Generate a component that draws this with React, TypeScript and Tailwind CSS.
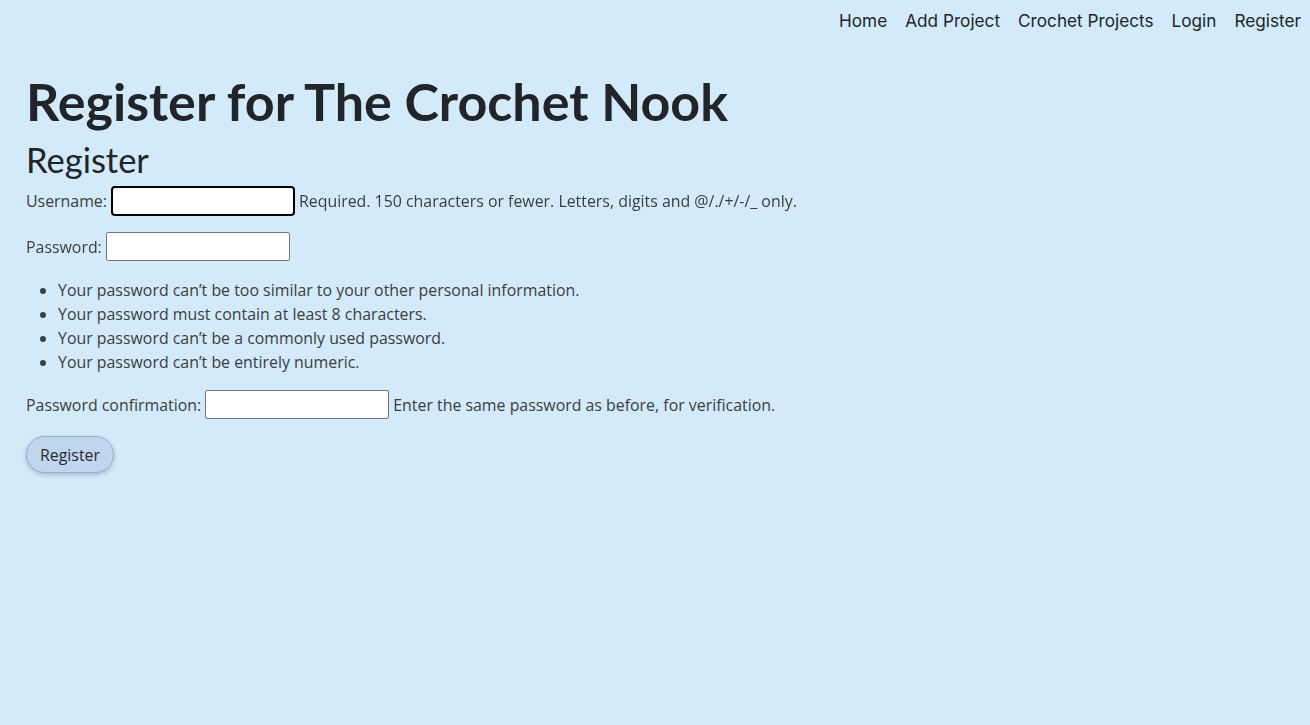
import React from 'react';

const navLinks = ['Home', 'Add Project', 'Crochet Projects', 'Login', 'Register'];

const rules = [
  'Your password can’t be too similar to your other personal information.',
  'Your password must contain at least 8 characters.',
  'Your password can’t be a commonly used password.',
  'Your password can’t be entirely numeric.',
];

const App: React.FC = () => {
  return (
    <div className="min-h-[725px] bg-[#d2eaf9] font-['Open_Sans',sans-serif] text-[#3d3d3d]">
      {/* Top nav */}
      <nav className="flex justify-end gap-[18px] pr-[9px] pt-[9px] font-['Inter',sans-serif] text-[17.2px] text-[#212529]">
        {navLinks.map((l) => (
          <a key={l} href="#" className="leading-[24px]">
            {l}
          </a>
        ))}
      </nav>

      <main className="px-[26px] pt-[37px]">
        <h1 className="font-['Lato',sans-serif] text-[52px] font-bold leading-[62px] text-[#212529]">
          Register for The Crochet Nook
        </h1>
        <h2 className="mt-[8px] font-['Lato',sans-serif] text-[34.5px] leading-[40px] text-[#212529]">Register</h2>

        <form className="mt-[6px] text-[15.9px] leading-[22px]" onSubmit={(e) => e.preventDefault()}>
          <p className="flex items-center gap-[4px]">
            <label htmlFor="username">Username:</label>
            <input
              id="username"
              className="h-[30px] w-[184px] rounded-[4px] border-2 border-black bg-white pl-[2px] caret-black outline-none"
              autoFocus
            />
            <span>Required. 150 characters or fewer. Letters, digits and @/./+/-/_ only.</span>
          </p>

          <p className="mt-[16px] flex items-center gap-[4px]">
            <label htmlFor="password">Password:</label>
            <input
              id="password"
              type="password"
              className="h-[29px] w-[184px] rounded-[2px] border border-[#767676] bg-white"
            />
          </p>

          <ul className="mt-[17px] list-disc pl-[32px] leading-[24px]">
            {rules.map((r) => (
              <li key={r}>{r}</li>
            ))}
          </ul>

          <p className="mt-[16px] flex items-center gap-[4px]">
            <label htmlFor="password2">Password confirmation:</label>
            <input
              id="password2"
              type="password"
              className="h-[29px] w-[184px] rounded-[2px] border border-[#767676] bg-white"
            />
            <span>Enter the same password as before, for verification.</span>
          </p>

          <button
            type="submit"
            className="mt-[17px] h-[37px] rounded-full border border-[#8fb3cf] bg-[#bfd6ee] px-[13px] text-[15.9px] text-[#2a2a2a] shadow-[0_2px_5px_rgba(0,0,0,0.2)]"
          >
            Register
          </button>
        </form>
      </main>
    </div>
  );
};

export default App;
